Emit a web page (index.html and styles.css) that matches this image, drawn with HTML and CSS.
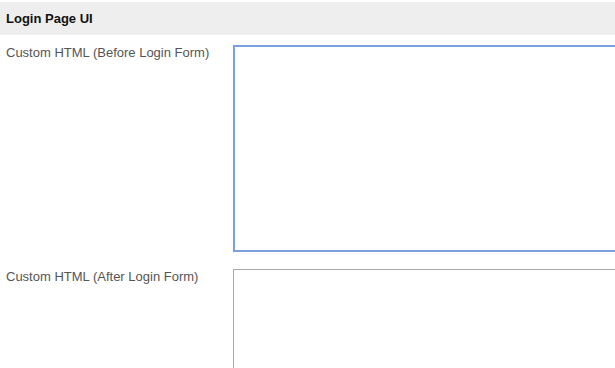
FILE: index.html
```html
<!DOCTYPE html>
<html lang="en">
  <head>
    <meta charset="UTF-8" />
    <title>Login Page UI</title>
    <link rel="stylesheet" href="styles.css">
  </head>
  <body>
    <div class="section">
      <h3 class="section-title">Login Page UI</h3>
      <div class="form-rows">
        <div class="form-row">
          <label class="form-label" for="beforeLogin">Custom HTML (Before Login Form)</label>
          <textarea id="beforeLogin" class="form-input focused"></textarea>
        </div>
        <div class="form-row">
          <label class="form-label" for="afterLogin">Custom HTML (After Login Form)</label>
          <textarea id="afterLogin" class="form-input"></textarea>
        </div>
      </div>
    </div>
  </body>
</html>
```

FILE: styles.css
```css
* {
  box-sizing: border-box;
}
body {
  font-family: "Liberation Sans", Arial, sans-serif;
  margin: 0;
  padding: 2px 0 0;
  background-color: white;
  overflow: hidden;
}
.section {
  height: 366px;
  overflow: hidden;
}
.section-title {
  margin: 0;
  height: 33px;
  line-height: 33px;
  padding: 0 6px;
  font-size: 13px;
  font-weight: bold;
  color: #111;
  background-color: #eeeeee;
}
.form-rows {
  display: flex;
  flex-direction: column;
  gap: 17px;
  padding-top: 10px;
}
.form-row {
  display: flex;
  align-items: flex-start;
  overflow: hidden;
}
.form-label {
  width: 233px;
  flex-shrink: 0;
  padding: 0 6px;
  font-size: 13px;
  color: #555;
}
.form-input {
  display: block;
  flex: 0 0 400px;
  height: 207px;
  margin: 0;
  border: 1px solid #aaaaaa;
  border-right: none;
  resize: none;
}
.focused {
  border: 2px solid #7b9fe3;
  border-right: none;
}
```
